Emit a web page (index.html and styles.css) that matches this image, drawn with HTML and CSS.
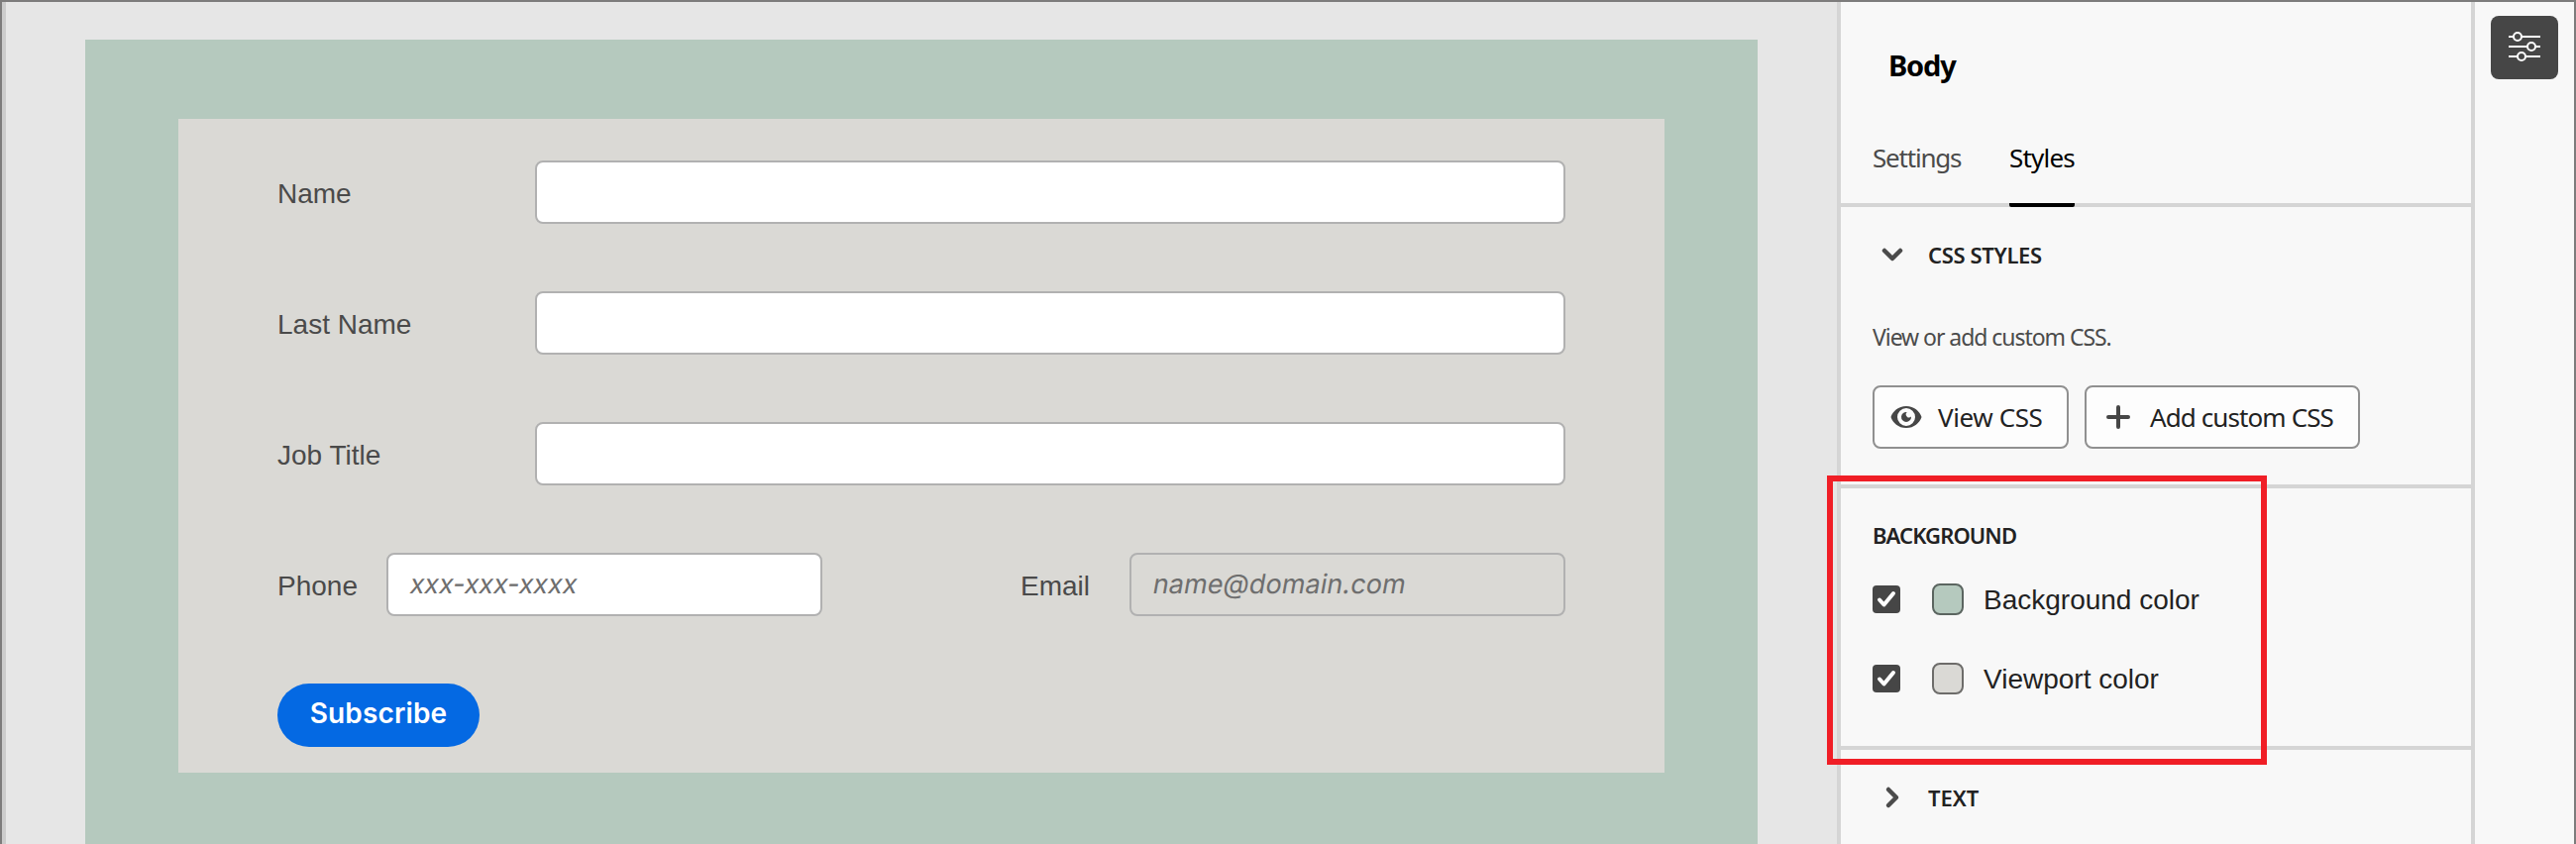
FILE: index.html
```html
<!DOCTYPE html>
<html lang="en">
<head>
<meta charset="utf-8">
<title>Form editor</title>
<link rel="stylesheet" href="styles.css">
</head>
<body>
<div class="app">
  <main class="canvas">
    <div class="page">
      <form class="viewport">
        <div class="row"><label class="label wide">Name</label><div class="field"></div></div>
        <div class="row"><label class="label wide">Last Name</label><div class="field"></div></div>
        <div class="row"><label class="label wide">Job Title</label><div class="field"></div></div>
        <div class="row split">
          <div class="pair"><label class="label phone">Phone</label><div class="field"><span class="ph tel">xxx-xxx-xxxx</span></div></div>
          <div class="pair"><label class="label email">Email</label><div class="field disabled"><span class="ph mail">name@domain.com</span></div></div>
        </div>
        <button type="button" class="subscribe"><span>Subscribe</span></button>
      </form>
    </div>
  </main>
  <aside class="panel">
    <header class="head">
      <h1 class="title">Body</h1>
      <nav class="tabs"><span class="tab t-settings">Settings</span><span class="tab active t-styles">Styles</span></nav>
    </header>
    <section class="section css">
      <div class="section-title">
        <svg class="chev" viewBox="0 0 24 24"><path d="M4 8l8 8 8-8"/></svg>
        <span class="caps c-css">CSS STYLES</span>
      </div>
      <p class="hint">View or add custom CSS.</p>
      <div class="actions">
        <button type="button" class="btn view">
          <svg class="eye" viewBox="0 0 32 26"><path fill-rule="evenodd" d="M16 2C8 2 2.500 7 0.500 13C2.500 19 8 24 16 24S29.500 19 31.500 13C29.500 7 24 2 16 2ZM16 4A9 9 0 1 1 16 22A9 9 0 1 1 16 4Z"/><path d="M16.800 8A5 5 0 1 0 21 12.600A2.600 2.600 0 1 1 16.800 8Z"/></svg>
          <span class="b-view">View CSS</span>
        </button>
        <button type="button" class="btn add">
          <svg class="plus" viewBox="0 0 26 26"><path d="M13 3v20M3 13h20"/></svg>
          <span class="b-add">Add custom CSS</span>
        </button>
      </div>
    </section>
    <section class="section background">
      <h2 class="caps c-bg">BACKGROUND</h2>
      <div class="option"><span class="check"><svg viewBox="0 0 28 28"><path d="M7 14.500l4.500 5L21 8"/></svg></span><span class="swatch green"></span><span class="o-bg">Background color</span></div>
      <div class="option"><span class="check"><svg viewBox="0 0 28 28"><path d="M7 14.500l4.500 5L21 8"/></svg></span><span class="swatch stone"></span><span class="o-vp">Viewport color</span></div>
    </section>
    <section class="section text">
      <div class="section-title">
        <svg class="chev" viewBox="0 0 24 24"><path d="M8 4l8 8-8 8"/></svg>
        <span class="caps c-text">TEXT</span>
      </div>
    </section>
  </aside>
  <div class="rail">
    <button type="button" class="tool"><svg viewBox="0 0 32 30"><path d="M0 5h5M13 5h19M0 15h19M27 15h5M0 25h9M17 25h15"/><circle cx="9" cy="5" r="4"/><circle cx="23" cy="15" r="4"/><circle cx="13" cy="25" r="4"/></svg></button>
  </div>
  <div class="highlight"></div>
</div>
</body>
</html>
```
FILE: styles.css
```css
* { box-sizing: border-box; }
body { margin: 0; }
button { margin: 0; font: inherit; }
.app {
  position: relative;
  display: flex;
  width: 2600px;
  height: 852px;
  overflow: hidden;
  border: 2px solid #7d7c7c;
  border-bottom: 0;
  background: #f8f8f8;
  font-family: "Liberation Sans", Arial, sans-serif;
  font-size: 28px;
  color: #222;
}
.canvas { width: 1852px; padding: 38px 80px 0 80px; border-left: 4px solid #ccc; background: #e6e6e6; }
.page { width: 1688px; height: 812px; padding: 80px 94px; background: #b5c9be; }
.viewport { width: 1500px; height: 660px; padding: 42px 100px 0; background: #dad9d5; }
.row { display: flex; height: 64px; margin-bottom: 68px; }
.split { justify-content: space-between; }
.pair { display: flex; }
.label { line-height: 68px; color: #4a4a4a; }
.label.wide { width: 260px; }
.label.phone { width: 110px; }
.label.email { width: 110px; }
.field { flex: 1; border: 2px solid #b1b1b1; border-radius: 8px; background: #fff; }
.pair .field { flex: none; width: 440px; padding-left: 22px; line-height: 60px; color: #6e6e6e; }
.field.disabled { background: transparent; }
.ph { display: inline-block; transform: skewX(-10deg); font-family: Inter, sans-serif; font-size: 27px; }
.tel { letter-spacing: -0.1px; }
.mail { letter-spacing: 0.1px; }
.subscribe { display: block; width: 204px; height: 64px; padding: 0; border: 0; border-radius: 32px; background: #0469e3; color: #fff; font-family: Inter, sans-serif; font-weight: 600; letter-spacing: 0.15px; }
.subscribe span { display: block; height: 64px; line-height: 61px; }

.panel { width: 644px; border-left: 4px solid #d5d5d5; border-right: 4px solid #d5d5d5; font-family: "Noto Sans", sans-serif; }
.head { height: 207px; padding: 38px 32px 0; border-bottom: 4px solid #d5d5d5; }
.title { margin: 0 0 0 16px; font-size: 29px; line-height: 52px; font-weight: 700; letter-spacing: -1.2px; color: #000; }
.tabs { display: flex; gap: 48px; height: 117px; padding-top: 40px; font-size: 26px; line-height: 54px; color: #4b4b4b; }
.tab { height: 77px; }
.t-settings { width: 90px; letter-spacing: -1.2px; }
.t-styles { width: 66px; letter-spacing: -0.8px; }
.tab.active { color: #000; border-bottom: 4px solid #000; border-radius: 2px; }
.section { padding: 0 32px; border-bottom: 4px solid #d5d5d5; }
.css { height: 284px; }
.background { height: 264px; padding-top: 28px; }
.section.text { border: 0; }
.section-title { display: flex; align-items: center; gap: 24px; height: 96px; padding-left: 8px; }
.chev { width: 24px; height: 24px; fill: none; stroke: #4b4b4b; stroke-width: 4.500; stroke-linecap: round; stroke-linejoin: round; }
.caps { margin: 0; font-size: 22px; line-height: 38px; font-weight: 600; }
.c-css { letter-spacing: -0.35px; }
.c-bg { margin-bottom: 6px; letter-spacing: -0.9px; }
.hint { margin: 15px 0 29px; font-size: 23px; line-height: 40px; letter-spacing: -1.05px; color: #4b4b4b; }
.actions { display: flex; gap: 16px; }
.btn { display: flex; align-items: center; height: 64px; padding: 0 0 0 16px; border: 2px solid #909090; border-radius: 8px; background: #fdfdfd; color: #222; font-size: 26px; text-align: left; white-space: nowrap; }
.view { width: 198px; gap: 16px; letter-spacing: -0.4px; }
.add { width: 278px; gap: 19px; padding-left: 19px; letter-spacing: -0.9px; }
.eye { width: 32px; height: 26px; fill: #464646; }
.plus { width: 26px; height: 26px; fill: none; stroke: #464646; stroke-width: 4; stroke-linecap: round; }
.option { display: flex; align-items: center; height: 80px; font-family: "Liberation Sans", Arial, sans-serif; }
.option span:last-child { padding-top: 2px; }
.check { width: 28px; height: 28px; margin-right: 32px; border-radius: 4px; background: #464646; }
.check svg { display: block; fill: none; stroke: #fff; stroke-width: 4; stroke-linecap: round; stroke-linejoin: round; }
.swatch { width: 32px; height: 32px; margin-right: 20px; border: 2px solid #666; border-radius: 8px; }
.green { background: #b5c9be; border-color: #5b6560; }
.stone { background: #dad9d5; border-color: #6d6c6a; }
.rail { flex: 1; padding: 14px 0 0 16px; }
.tool { display: flex; align-items: center; justify-content: center; width: 68px; height: 64px; padding: 0 0 2px; border: 0; border-radius: 8px; background: #464646; }
.tool svg { width: 32px; height: 30px; fill: none; stroke: #fff; stroke-width: 2; }
.highlight { position: absolute; left: 1842px; top: 478px; width: 444px; height: 292px; border: 6px solid #f01e26; }
```
